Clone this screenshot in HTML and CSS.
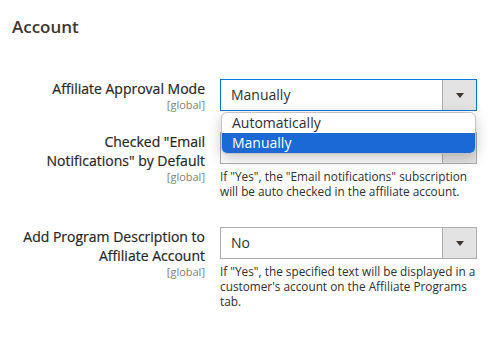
FILE: index.html
```html
<!DOCTYPE html>
<html lang="en">
<head>
    <meta charset="UTF-8">
    <title>Account</title>
    <link rel="stylesheet" href="styles.css">
</head>
<body>
    <div class="section">
        <h2 class="section-title">Account</h2>

        <div class="field">
            <div class="field-label">
                <span class="label-text">Affiliate Approval Mode</span>
                <span class="scope">[global]</span>
            </div>
            <div class="field-control">
                <div class="select focused">
                    <span class="select-value">Manually</span>
                    <span class="select-btn"><i class="arrow"></i></span>
                </div>
                <!-- open dropdown list -->
                <ul class="options">
                    <li class="option">Automatically</li>
                    <li class="option selected">Manually</li>
                </ul>
            </div>
        </div>

        <div class="field">
            <div class="field-label">
                <span class="label-text">Checked "Email Notifications" by Default</span>
                <span class="scope">[global]</span>
            </div>
            <div class="field-control">
                <div class="select">
                    <span class="select-value">Yes</span>
                    <span class="select-btn"><i class="arrow"></i></span>
                </div>
                <p class="note">If "Yes", the "Email notifications" subscription will be auto checked in the affiliate account.</p>
            </div>
        </div>

        <div class="field">
            <div class="field-label">
                <span class="label-text">Add Program Description to Affiliate Account</span>
                <span class="scope">[global]</span>
            </div>
            <div class="field-control">
                <div class="select">
                    <span class="select-value">No</span>
                    <span class="select-btn"><i class="arrow"></i></span>
                </div>
                <p class="note">If "Yes", the specified text will be displayed in a customer's account on the Affiliate Programs tab.</p>
            </div>
        </div>
    </div>
</body>
</html>
```

FILE: styles.css
```css
body {
    margin: 0;
    background: #fff;
    font-family: "Open Sans", "Liberation Sans", sans-serif;
    color: #303030;
}

.section {
    padding: 15px 11px 0 12px;
}

.section-title {
    margin: 0 0 41px;
    font-size: 17px;
    line-height: 23px;
    font-weight: 600;
    color: #41362f;
}

.field {
    display: flex;
    gap: 15px;
    margin-bottom: 21px;
}

.field-label {
    width: 185px;
    padding-left: 8px;
    text-align: right;
    display: flex;
    flex-direction: column;
    align-items: flex-end;
}

.label-text {
    font-size: 14px;
    line-height: 19px;
    font-weight: 400;
    color: #262626;
    -webkit-text-stroke: 0.2px #262626;
}

.scope {
    font-size: 11px;
    line-height: 13px;
    color: #808080;
}

.field-control {
    width: 257px;
    position: relative;
}

.select {
    display: flex;
    height: 32px;
    box-sizing: border-box;
    border: 1px solid #adadad;
    background: #fff;
}

.select.focused {
    border-color: #007bdb;
}

.select-value {
    flex: 1;
    padding-left: 10px;
    font-size: 14px;
    line-height: 30px;
    color: #303030;
}

.select-btn {
    width: 33px;
    border-left: 1px solid #adadad;
    background: #e3e3e3;
    display: flex;
    align-items: center;
    justify-content: center;
}

.arrow {
    width: 0;
    height: 0;
    border-left: 4px solid transparent;
    border-right: 4px solid transparent;
    border-top: 5px solid #41362f;
}

.note {
    margin: 5px 0 7px;
    font-size: 11.8px;
    line-height: 15px;
    color: #303030;
}

.options {
    position: absolute;
    top: 33px;
    left: 1px;
    right: 1px;
    margin: 0;
    padding: 0;
    list-style: none;
    background: #fff;
    border: 1px solid #c4c4c4;
    border-radius: 6px;
    overflow: hidden;
    box-shadow: 0 4px 14px rgba(0, 0, 0, 0.22);
    z-index: 2;
}

.option {
    padding-left: 10px;
    font-size: 14px;
    line-height: 20px;
    color: #303030;
}

.option.selected {
    background: #1b69d4;
    color: #fff;
}
```
